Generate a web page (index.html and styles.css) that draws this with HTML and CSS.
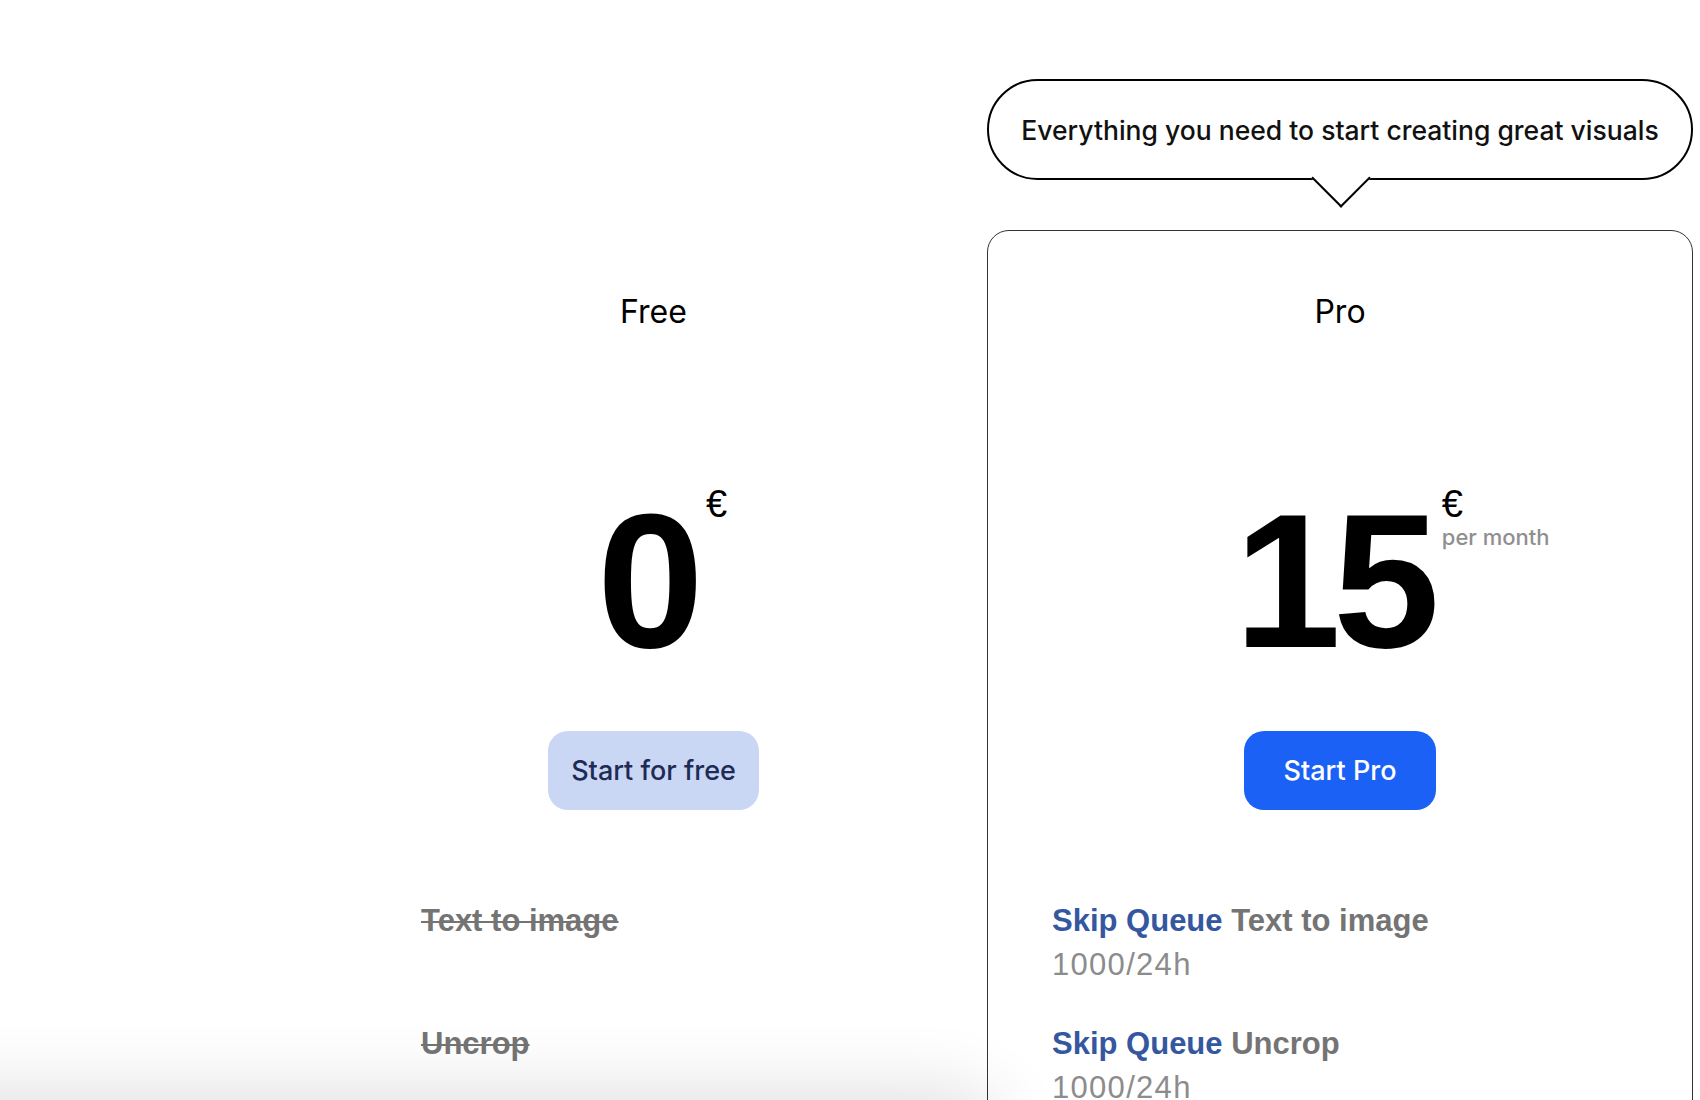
FILE: index.html
```html
<!DOCTYPE html>
<html lang="en">
<head>
    <meta charset="UTF-8">
    <meta name="viewport" content="width=device-width, initial-scale=1.0">
    <title>Pricing</title>
    <link rel="stylesheet" href="styles.css">
</head>
<body>
    <div class="pricing">
        <div class="bubble-cell">
            <div class="bubble">Everything you need to start creating great visuals</div>
        </div>

        <div class="plan plan-free">
            <div class="plan-name">Free</div>
            <div class="price">
                <span class="amount">0</span>
                <span class="price-sup">
                    <span class="currency">&euro;</span>
                </span>
            </div>
            <a class="btn btn-free" href="#">Start for free</a>
            <ul class="features">
                <li class="feature off">Text to image</li>
                <li class="feature off">Uncrop</li>
            </ul>
        </div>

        <div class="plan plan-pro">
            <div class="plan-name">Pro</div>
            <div class="price">
                <span class="amount">15</span>
                <span class="price-sup">
                    <span class="currency">&euro;</span>
                    <span class="period">per month</span>
                </span>
            </div>
            <a class="btn btn-pro" href="#">Start Pro</a>
            <ul class="features">
                <li class="feature"><span class="skip">Skip Queue</span> Text to image<br><span class="limit">1000/24h</span></li>
                <li class="feature"><span class="skip">Skip Queue</span> Uncrop<br><span class="limit">1000/24h</span></li>
            </ul>
        </div>
    </div>

    <div class="bottom-shade"></div>
</body>
</html>
```

FILE: styles.css
```css
body {
    margin: 0;
    background: #fff;
    color: #000;
    font-family: Inter, "Liberation Sans", Arial, sans-serif;
}

.pricing {
    display: grid;
    grid-template-columns: 667px 706px;
    row-gap: 50px;
    margin-left: 320px;
    padding-top: 79px;
}

.bubble-cell {
    grid-column: 2;
}

.bubble {
    position: relative;
    box-sizing: border-box;
    height: 101px;
    border: 2px solid #000;
    border-radius: 51px;
    display: flex;
    align-items: center;
    justify-content: center;
    font-size: 26.5px;
    font-weight: 500;
    color: #111;
}

/* little pointer under the speech bubble */
.bubble::after {
    content: "";
    position: absolute;
    left: calc(50% - 20px);
    bottom: -21px;
    width: 40px;
    height: 40px;
    background: #fff;
    border-right: 2px solid #000;
    border-bottom: 2px solid #000;
    transform: rotate(45deg);
}

.plan {
    grid-row: 2;
    display: flex;
    flex-direction: column;
    align-items: center;
    border: 1.5px solid transparent;
    padding-top: 61px;
}

.plan-free {
    grid-column: 1;
}

.plan-pro {
    grid-column: 2;
    border-color: #333;
    border-radius: 22px;
    padding-bottom: 80px;
}

.plan-name {
    font-size: 32px;
    line-height: 40px;
}

.price {
    position: relative;
    margin-top: 149px;
    font-family: "Liberation Sans", Arial, sans-serif;
}

.amount {
    display: block;
    font-size: 192px;
    line-height: 200px;
    font-weight: bold;
    letter-spacing: -8px;
    padding-right: 14px;
}

.price-sup {
    position: absolute;
    left: calc(100% - 4px);
    top: 4px;
    display: flex;
    flex-direction: column;
    white-space: nowrap;
}

.currency {
    font-size: 38px;
    line-height: 38px;
}

.period {
    margin-top: 1px;
    font-family: Inter, sans-serif;
    font-size: 22px;
    line-height: 26px;
    font-weight: 500;
    color: #8f8f8f;
}

.btn {
    margin-top: 50px;
    height: 79px;
    box-sizing: border-box;
    display: flex;
    align-items: center;
    border-radius: 20px;
    font-size: 27px;
    font-weight: 500;
    text-decoration: none;
}

.btn-free {
    padding: 0 23px;
    background: #c9d7f4;
    color: #1e2b54;
}

.btn-pro {
    padding: 0 40px;
    background: #1b61f5;
    color: #fff;
}

.features {
    align-self: stretch;
    list-style: none;
    margin: 89px 0 0;
    padding: 0 0 0 100px;
    display: flex;
    flex-direction: column;
    gap: 35px;
    font-family: "Liberation Sans", Arial, sans-serif;
}

.plan-pro .features {
    padding-left: 64px;
}

.feature {
    min-height: 88px;
    font-size: 31px;
    line-height: 44px;
    font-weight: bold;
    color: #747474;
}

.feature.off {
    text-decoration: line-through;
    text-decoration-thickness: 2px;
}

.skip {
    color: #3557a0;
}

.limit {
    font-weight: normal;
    letter-spacing: 1.3px;
    color: #8c8c8c;
}

/* soft shadow of the sticky bar sitting just below the fold */
.bottom-shade {
    position: fixed;
    left: -120px;
    bottom: -80px;
    width: 1110px;
    height: 80px;
    border-radius: 40px;
    background: #ddd;
    box-shadow: 0 0 70px 12px rgba(0, 0, 0, 0.12);
}
```
